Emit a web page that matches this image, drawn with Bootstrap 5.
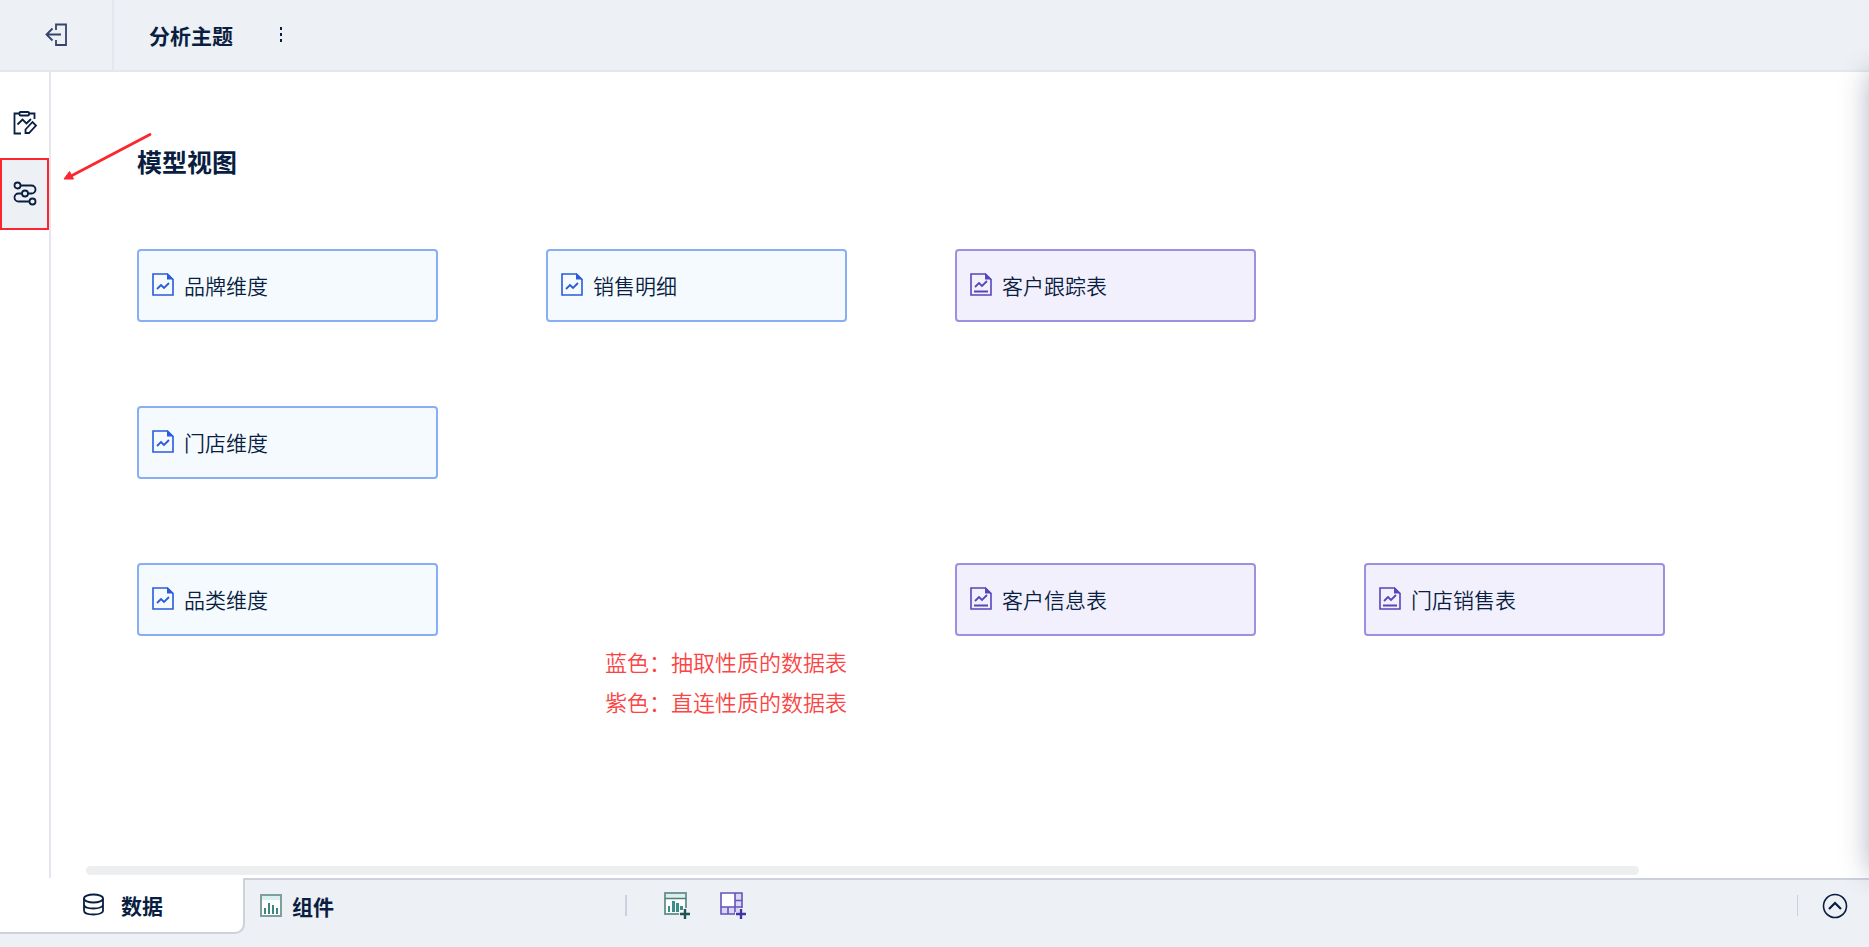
<!DOCTYPE html>
<html lang="zh-CN">
<head>
<meta charset="utf-8">
<meta name="viewport" content="width=device-width, initial-scale=1">
<title>分析主题</title>
<link href="https://cdn.jsdelivr.net/npm/bootstrap@5.3.0/dist/css/bootstrap.min.css" rel="stylesheet">
<style>
  body { font-family: "Noto Sans CJK SC", sans-serif; color: #091e40; background: #fff; overflow: hidden; }
  svg { display: block; flex: none; overflow: visible; }
  .plain-btn { border: 0; background: none; padding: 0; color: inherit; display: flex; align-items: center; justify-content: center; }
  .topbar { height: 72px; background: #edf0f5; border-bottom: 2px solid #e4e8ee; }
  .back-cell { width: 114px; border-right: 2px solid #e4e8ee; }
  .bar-text { font-size: 21px; line-height: 32px; font-weight: 700; }
  .topbar .bar-text { margin-left: 35px; margin-right: 46px; }
  .side-rail { width: 51px; padding-top: 14px; border-right: 2px solid #e4e8ee; }
  .side-rail .plain-btn { height: 72px; width: 49px; }
  .side-rail .current { background: #edf0f5; border: 2px solid #fc262f; }
  .model-canvas { padding-left: 86px; padding-top: 69px; min-width: 0; }
  .view-title { font-size: 25px; line-height: 40px; font-weight: 700; margin: 0 0 68px; }
  .node-grid { display: grid; grid-template-columns: repeat(4, 301px); grid-auto-rows: 73px; column-gap: 108px; row-gap: 84px; }
  .node { border: 2px solid #88aef6; border-radius: 4px; background: #f5faff; padding: 0 0 2px 13px; gap: 10px; font-size: 21px; font-weight: 350; line-height: 32px; color: #2b5bdc; }
  .node span { color: #091e40; }
  .node.direct { border-color: #9f8fe0; background: #f3f0fe; color: #5646bb; }
  .c1 { grid-column: 1; } .c2 { grid-column: 2; } .c3 { grid-column: 3; } .c4 { grid-column: 4; }
  .legend { margin: 5px 0 0 468px; font-size: 22px; line-height: 40px; color: #fb4444; font-weight: 350; }
  .pointer-arrow { position: absolute; left: 12px; top: 60px; pointer-events: none; }
  .scroll-thumb { height: 9px; border-radius: 5px; background: #edeef0; margin: auto 230px 3px -51px; }
  .bottombar { height: 69px; background: #edf0f5; }
  .tab-data { width: 245px; height: 56px; background: #fff; border: solid #cdd1dc; border-width: 0 2px 2px 0; border-radius: 0 0 10px 0; }
  .tab-data .plain-btn { margin-left: 83px; gap: 17px; }
  .bottom-rest { height: 53px; border-top: 2px solid #cdd1dc; padding-left: 15px; }
  .tab-widget { width: 365px; gap: 10px; }
  .tab-widget.plain-btn { justify-content: flex-start; }
  .tool-btn { margin-left: 36px; }
  .tool-btn + .tool-btn { margin-left: 28px; }
  .expand-btn { margin: 0 21px 0 24px; }
  .tick { width: 2px; height: 21px; background: #cdd1dc; }
  .tick.thin { width: 1px; }
  .drawer-edge { position: absolute; right: -60px; top: 72px; bottom: 75px; width: 60px; box-shadow: 0 0 28px rgba(30, 40, 80, .34); }
</style>
</head>
<body>
<svg width="0" height="0" class="position-absolute" aria-hidden="true">
  <symbol id="sheet" viewBox="0 0 22 23">
    <path d="M1 1H15.500L21 6.500V22H1Z" fill="none" stroke="currentColor" stroke-width="1.600"/>
    <path d="M15 0L22 6.500H15Z" fill="currentColor"/>
    <path d="M5 16L9 12L12 15L17 10" fill="none" stroke="currentColor" stroke-width="1.800"/>
  </symbol>
  <symbol id="sheet-direct" viewBox="0 0 22 23">
    <path d="M1 1H15.500L21 6.500V22H1Z" fill="none" stroke="currentColor" stroke-width="1.600"/>
    <path d="M15 0L22 6.500H15Z" fill="currentColor"/>
    <path d="M5 14L9 10L12 13L17 8M4 18.500H18" fill="none" stroke="currentColor" stroke-width="1.800"/>
  </symbol>
</svg>
<div class="d-flex flex-column vh-100 position-relative overflow-hidden">
  <header class="topbar d-flex align-items-center">
    <div class="back-cell h-100 d-flex align-items-center justify-content-center">
      <button class="plain-btn" aria-label="退出"><svg width="22" height="24" fill="none" stroke="#34446a" stroke-width="1.800"><path d="M11 7V1.500H21V22H11V17M1.500 11.500H16M7.500 5.500L1.500 11.500L7.500 17.500"/></svg></button>
    </div>
    <h1 class="bar-text mb-0">分析主题</h1>
    <button class="plain-btn" aria-label="更多"><svg width="6" height="18" fill="#091e40"><path d="M1 1h2v3H1zM1 7h2v3H1zM1 13h2v3H1z"/></svg></button>
  </header>
  <div class="d-flex flex-grow-1">
    <nav class="side-rail flex-shrink-0">
      <button class="plain-btn" aria-label="编辑"><svg width="24" height="24" fill="none" stroke="#091e40" stroke-width="1.800"><path d="M6 3.500H1.500V23.500H8M16 3.500H21.500V9"/><rect x="6.500" y="2" width="9.500" height="3.500" rx="1"/><path d="M4.500 14.500L9.500 9.500L13.500 13.500L18 9"/><path d="M12.500 19.500L19.500 12L23 15.500L16 23H12.500Z"/></svg></button>
      <button class="plain-btn current" aria-label="模型视图"><svg width="24" height="24" fill="none" stroke="#091e40" stroke-width="1.800"><circle cx="4.500" cy="3.500" r="3"/><circle cx="12" cy="11.500" r="3"/><circle cx="19.500" cy="19.500" r="3"/><path d="M7.500 3.500H18.500A4 4 0 0 1 18.500 11.500H15M9 11.500H5.500A4 4 0 0 0 5.500 19.500H16.500"/></svg></button>
    </nav>
    <main class="model-canvas flex-grow-1 d-flex flex-column position-relative">
      <svg class="pointer-arrow" width="94" height="52"><path d="M87 2.500L9 43.500" stroke="#fc262f" stroke-width="2.800" stroke-linecap="round"/><path d="M1 47L6.500 39.500L10.500 47Z" fill="#fc262f" stroke="#fc262f"/></svg>
      <h2 class="view-title">模型视图</h2>
      <div class="node-grid">
        <div class="node c1 d-flex align-items-center"><svg width="22" height="23"><use href="#sheet"/></svg><span>品牌维度</span></div>
        <div class="node c2 d-flex align-items-center"><svg width="22" height="23"><use href="#sheet"/></svg><span>销售明细</span></div>
        <div class="node direct c3 d-flex align-items-center"><svg width="22" height="23"><use href="#sheet-direct"/></svg><span>客户跟踪表</span></div>
        <div class="node c1 d-flex align-items-center"><svg width="22" height="23"><use href="#sheet"/></svg><span>门店维度</span></div>
        <div class="node c1 d-flex align-items-center"><svg width="22" height="23"><use href="#sheet"/></svg><span>品类维度</span></div>
        <div class="node direct c3 d-flex align-items-center"><svg width="22" height="23"><use href="#sheet-direct"/></svg><span>客户信息表</span></div>
        <div class="node direct c4 d-flex align-items-center"><svg width="22" height="23"><use href="#sheet-direct"/></svg><span>门店销售表</span></div>
      </div>
      <div class="legend"><div>蓝色：抽取性质的数据表</div><div>紫色：直连性质的数据表</div></div>
      <div class="scroll-thumb"></div>
    </main>
  </div>
  <footer class="bottombar d-flex align-items-start">
    <div class="tab-data d-flex flex-shrink-0">
      <button class="plain-btn bar-text"><svg width="21" height="22" fill="none" stroke="#091e40" stroke-width="1.800"><ellipse cx="10.500" cy="4.500" rx="9.500" ry="4"/><path d="M1 4.500V16.500C1 21.800 20 21.800 20 16.500V4.500M1 10.500C1 15.800 20 15.800 20 10.500"/></svg>数据</button>
    </div>
    <div class="bottom-rest flex-grow-1 d-flex align-items-center">
      <button class="plain-btn bar-text tab-widget"><svg width="22" height="23"><rect x="1" y="1" width="20" height="21" fill="#fff" stroke="#7da09f" stroke-width="2"/><path d="M2 2h18v4H2z" fill="#d9f0ee"/><path d="M4 14h2v6H4zM8 9h2v11H8zM12 11h2v9h-2zM16 14h2v6h-2z" fill="#3c8780"/></svg>组件</button>
      <div class="tick"></div>
      <button class="plain-btn tool-btn" aria-label="添加组件"><svg width="28" height="28"><rect x="2" y="1" width="21" height="21" fill="#fff" stroke="#648f8c" stroke-width="1.800"/><path d="M3 2h19v4H3z" fill="#dcefed"/><path d="M2 6.500H23" stroke="#4a7f7c" stroke-width="1.500"/><path d="M5 14h2v6H5zM9 9h3v11H9zM13 11h3v9h-3zM17 14h3v4h-3z" fill="#3c8f86"/><path d="M22 16V28M16 22H28" stroke="#edf0f5" stroke-width="4"/><path d="M22 17V27M17 22H27" stroke="#1f5254" stroke-width="2.400"/></svg></button>
      <button class="plain-btn tool-btn" aria-label="添加仪表板"><svg width="28" height="28"><path d="M2 1H23V22H2Z" fill="#dcd6f8"/><path d="M2 1H16V15H2Z" fill="#fff"/><path d="M2 1H23V22H2ZM16 1V15M2 15H23M16 8.500H23M9 15V22M16 15V22" fill="none" stroke="#6354b8" stroke-width="1.600"/><path d="M22 16V28M16 22H28" stroke="#edf0f5" stroke-width="4"/><path d="M22 17V27M17 22H27" stroke="#4034a4" stroke-width="2.400"/></svg></button>
      <div class="tick thin ms-auto"></div>
      <button class="plain-btn expand-btn" aria-label="展开"><svg width="26" height="26" fill="none" stroke="#091e40"><circle cx="13" cy="13" r="11.500" stroke-width="1.600"/><path d="M7 16L13 10L19 16" stroke-width="2.200"/></svg></button>
    </div>
  </footer>
  <div class="drawer-edge"></div>
</div>
<script src="https://cdn.jsdelivr.net/npm/bootstrap@5.3.0/dist/js/bootstrap.bundle.min.js"></script>
</body>
</html>
